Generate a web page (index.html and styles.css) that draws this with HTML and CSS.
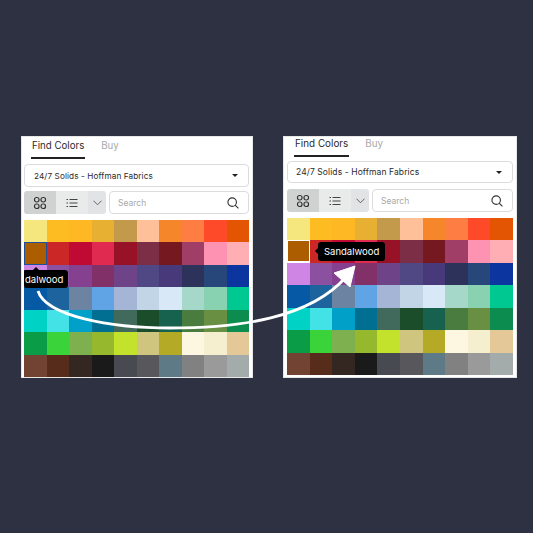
FILE: index.html
```html
<!DOCTYPE html>
<html lang="en">
<head>
    <meta charset="UTF-8">
    <meta name="viewport" content="width=device-width, initial-scale=1.0">
    <title>Find Colors</title>
    <link rel="stylesheet" href="styles.css">
</head>
<body>
    <div class="stage">
        <!-- Before: swatch hovered, tooltip cut off by the panel edge -->
        <div class="panel panel-before">
            <div class="tabs">
                <div class="tab active">Find Colors</div>
                <div class="tab">Buy</div>
            </div>
            <div class="select"><span>24/7 Solids - Hoffman Fabrics</span><i class="caret"></i></div>
            <div class="toolbar">
                <div class="views">
                    <div class="view view-on"><svg width="14" height="14" viewBox="0 0 14 14"><g fill="none" stroke="#333" stroke-width="1.2"><rect x="1.5" y="1.5" width="4.5" height="4.5" rx="2"/><rect x="8" y="1.5" width="4.5" height="4.5" rx="2"/><rect x="1.5" y="8" width="4.5" height="4.5" rx="2"/><rect x="8" y="8" width="4.5" height="4.5" rx="2"/></g></svg></div>
                    <div class="view"><svg width="14" height="14" viewBox="0 0 14 14"><path d="M4.5 3.5h8M4.5 7h8M4.5 10.5h8M1.5 3.5h1.5M1.5 7h1.5M1.5 10.5h1.5" fill="none" stroke="#444" stroke-width="1.2"/></svg></div>
                    <div class="view view-more"><svg width="9" height="9" viewBox="0 0 10 10"><path d="M.5 3l4.500 4.500L9.500 3" fill="none" stroke="#555" stroke-width="1"/></svg></div>
                </div>
                <div class="search"><span>Search</span><svg width="12" height="12" viewBox="0 0 13 13"><circle cx="5.6" cy="5.6" r="4.6" fill="none" stroke="#333" stroke-width="1.2"/><path d="M8.800 8.800l3.600 3.600" stroke="#333" stroke-width="1.2"/></svg></div>
            </div>
            <div class="swatches" data-selected="hover"></div>
            <div class="tip tip-cut">dalwood</div>
        </div>

        <!-- After: tooltip sits beside the swatch -->
        <div class="panel panel-after">
            <div class="tabs">
                <div class="tab active">Find Colors</div>
                <div class="tab">Buy</div>
            </div>
            <div class="select"><span>24/7 Solids - Hoffman Fabrics</span><i class="caret"></i></div>
            <div class="toolbar">
                <div class="views">
                    <div class="view view-on"><svg width="14" height="14" viewBox="0 0 14 14"><g fill="none" stroke="#333" stroke-width="1.2"><rect x="1.5" y="1.5" width="4.5" height="4.5" rx="2"/><rect x="8" y="1.5" width="4.5" height="4.5" rx="2"/><rect x="1.5" y="8" width="4.5" height="4.5" rx="2"/><rect x="8" y="8" width="4.5" height="4.5" rx="2"/></g></svg></div>
                    <div class="view"><svg width="14" height="14" viewBox="0 0 14 14"><path d="M4.5 3.5h8M4.5 7h8M4.5 10.5h8M1.5 3.5h1.5M1.5 7h1.5M1.5 10.5h1.5" fill="none" stroke="#444" stroke-width="1.2"/></svg></div>
                    <div class="view view-more"><svg width="9" height="9" viewBox="0 0 10 10"><path d="M.5 3l4.500 4.500L9.500 3" fill="none" stroke="#555" stroke-width="1"/></svg></div>
                </div>
                <div class="search"><span>Search</span><svg width="12" height="12" viewBox="0 0 13 13"><circle cx="5.6" cy="5.6" r="4.6" fill="none" stroke="#333" stroke-width="1.2"/><path d="M8.800 8.800l3.600 3.600" stroke="#333" stroke-width="1.2"/></svg></div>
            </div>
            <div class="swatches" data-selected="framed"></div>
            <div class="tip tip-side">Sandalwood</div>
        </div>

        <!-- Arrow across both panels -->
        <svg class="arrow" width="533" height="533" viewBox="0 0 533 533">
            <path d="M38 291C46 316 110 328 170 328C240 328 310 318 346 277" fill="none" stroke="#fff" stroke-width="2.8"/>
            <path d="M355 266L334 273L350 287Z" fill="#fff" stroke="#fff" stroke-width="1" stroke-linejoin="round"/>
        </svg>
    </div>

    <script>
        // Swatch colours, row by row
        const colors = [
            '#f5e67d', '#fdbc21', '#fdb824', '#e7b032', '#c39a4b', '#fec098', '#f5872a', '#fe7d42', '#fe4a28', '#e35503',
            '#ac5d00', '#cb2727', '#c00a33', '#e12a50', '#971227', '#7b2e45', '#751820', '#a03e68', '#fe92b3', '#ffaeb4',
            '#cf85e3', '#8b50a0', '#85408f', '#823068', '#6e4387', '#4f4884', '#47397a', '#2c3259', '#27467a', '#0c35a0',
            '#0559a5', '#1d649e', '#6c83a1', '#60a4e6', '#a4b5d6', '#c1d5e6', '#d8e8f6', '#a6d8c9', '#88d2b1', '#00c891',
            '#00d3c5', '#42e2e6', '#00a0c8', '#006f92', '#41695c', '#1b4d2b', '#16624f', '#4a7c3f', '#688f42', '#0c8c4f',
            '#0a9c47', '#3ad339', '#7eb050', '#95b82d', '#c2e22b', '#cfc57e', '#b4aa25', '#fdf6e0', '#f6efcf', '#e5c898',
            '#724233', '#572c1b', '#342722', '#1a1a1a', '#474a50', '#58585c', '#5f7a87', '#818181', '#9a9a9a', '#a4abab'
        ];

        document.querySelectorAll('.swatches').forEach(grid => {
            colors.forEach((color, i) => {
                const cell = document.createElement('div');
                cell.className = 'swatch';
                cell.style.backgroundColor = color;
                if (i === 10) cell.classList.add('swatch-' + grid.dataset.selected);
                grid.appendChild(cell);
            });
        });
    </script>
</body>
</html>
```

FILE: styles.css
```css
body {
    margin: 0;
    background-color: #2d3142;
    font-family: 'Inter', 'Liberation Sans', sans-serif;
    color: #2b2b2b;
}

.stage {
    position: relative;
    width: 533px;
    height: 533px;
    box-sizing: border-box;
    padding: 136px 16px 0 21px;
    display: flex;
    align-items: flex-start;
    gap: 30px;
    overflow: hidden;
}

.panel {
    position: relative;
    box-sizing: border-box;
    background-color: #fff;
    height: 242px;
    box-shadow: inset 0 0 0 1px rgba(225, 225, 225, 0.8);
}

.panel-before {
    width: 232px;
    padding: 0 4px 0 3px;
}

.panel-after {
    width: 234px;
    padding: 0 4px;
}

.tabs {
    display: flex;
    gap: 15px;
    height: 23px;
    padding-left: 7px;
    font-size: 9.7px;
}

.panel-after .tabs {
    height: 21px;
    font-size: 9.9px;
}

.tab {
    padding: 4px 1px 0;
    color: #a9a9a9;
    white-space: nowrap;
}

.panel-after .tab {
    padding-top: 1px;
}

.tab.active {
    color: #2b2b2b;
    border-bottom: 2px solid #222;
}

.select {
    margin-top: 5px;
    height: 23px;
    box-sizing: border-box;
    border: 1px solid #dcdcdc;
    border-radius: 4px;
    padding: 0 10px 0 9px;
    display: flex;
    align-items: center;
    justify-content: space-between;
    font-size: 8.2px;
    letter-spacing: 0.1px;
}

.panel-after .select {
    margin-top: 4px;
    height: 22px;
    padding-left: 8px;
    font-size: 8.5px;
}

.caret {
    width: 0;
    height: 0;
    border-left: 3px solid transparent;
    border-right: 3px solid transparent;
    border-top: 3px solid #222;
}

.toolbar {
    display: flex;
    gap: 3px;
    height: 23px;
    margin-top: 4px;
}

.panel-after .toolbar {
    margin-top: 6px;
}

.views {
    display: flex;
    border-radius: 3px;
    overflow: hidden;
}

.view {
    width: 32px;
    display: flex;
    align-items: center;
    justify-content: center;
    background-color: #e9eaea;
}

.view-on {
    background-color: #d0d2d2;
}

.view-more {
    width: 18px;
    background-color: #e2e3e4;
}

.search {
    flex: 1;
    box-sizing: border-box;
    border: 1px solid #dcdcdc;
    border-radius: 4px;
    padding: 0 9px 0 8px;
    display: flex;
    align-items: center;
    justify-content: space-between;
    font-size: 8.5px;
    color: #a9a9a9;
}

.swatches {
    display: grid;
    grid-template-columns: repeat(10, 1fr);
    grid-template-rows: repeat(7, 1fr);
    height: 157px;
    margin-top: 6px;
}

.swatch {
    box-sizing: border-box;
}

.swatch-hover {
    border: 1px solid #1f4f9c;
}

.swatch-framed {
    border: 1px solid #fff;
    border-width: 1px 1px 2px 1px;
}

.tip {
    position: absolute;
    background-color: #000;
    color: #fff;
    font-size: 9.5px;
    border-radius: 3px;
    white-space: nowrap;
    display: flex;
    align-items: center;
}

.tip-cut {
    left: 3px;
    top: 134px;
    width: 44px;
    height: 18px;
    box-sizing: border-box;
    padding-left: 1px;
    border-radius: 1px 3px 3px 2px;
}

.tip-side {
    left: 35px;
    top: 106px;
    height: 19px;
    padding: 0 6px;
}

.tip-side::before {
    content: '';
    position: absolute;
    left: -3px;
    top: 6px;
    border-top: 3px solid transparent;
    border-bottom: 3px solid transparent;
    border-right: 3px solid #000;
}

.panel-before::after {
    content: '';
    position: absolute;
    left: 12px;
    top: 131px;
    border-left: 3px solid transparent;
    border-right: 3px solid transparent;
    border-bottom: 3px solid #000;
}

.arrow {
    position: absolute;
    left: 0;
    top: 0;
    pointer-events: none;
}
```
